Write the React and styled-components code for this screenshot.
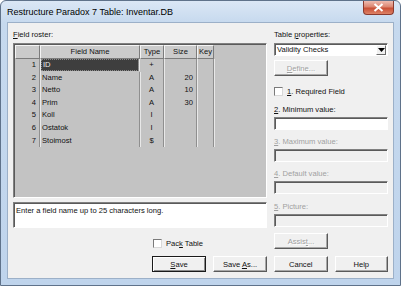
import styled, { createGlobalStyle } from "styled-components";

const GlobalStyle = createGlobalStyle`
  html, body { margin: 0; padding: 0; background: #fff; }
  body { font-family: "Liberation Sans", Arial, sans-serif; }
`;

const fields = [
  { name: "ID", type: "+", size: "" },
  { name: "Name", type: "A", size: "20" },
  { name: "Netto", type: "A", size: "10" },
  { name: "Prim", type: "A", size: "30" },
  { name: "Koll", type: "I", size: "" },
  { name: "Ostatok", type: "I", size: "" },
  { name: "Stoimost", type: "$", size: "" },
];

const cols = "25px 100px 24px 33px 17px 1fr";

export default function App() {
  return (
    <>
      <GlobalStyle />
      <Window>
        <TitleBar>
          <Title>Restructure Paradox 7 Table: Inventar.DB</Title>
          <CloseButton>
            <svg width="11" height="9" viewBox="0 0 11 9">
              <path d="M1.5 1 L9.5 8 M9.5 1 L1.5 8" stroke="#fff" strokeWidth="2" />
            </svg>
          </CloseButton>
        </TitleBar>
        <Client>
          <Column>
            <Label>
              <u>F</u>ield roster:
            </Label>
            <Roster>
              <HeadRow>
                <HeadCell />
                <HeadCell>Field Name</HeadCell>
                <HeadCell>Type</HeadCell>
                <HeadCell>Size</HeadCell>
                <HeadCell>Key</HeadCell>
              </HeadRow>
              {fields.map((f, i) => (
                <Row key={f.name}>
                  <Cell $align="right">{i + 1}</Cell>
                  <Cell $selected={i === 0}>{f.name}</Cell>
                  <Cell $align="center">{f.type}</Cell>
                  <Cell $align="right">{f.size}</Cell>
                  <Cell />
                </Row>
              ))}
            </Roster>
            <Status>Enter a field name up to 25 characters long.</Status>
            <CheckRow $top={10} $indent={140}>
              <Box />
              <span>
                Pac<u>k</u> Table
              </span>
            </CheckRow>
            <Buttons $top={8} $end>
              <Button $default>
                <u>S</u>ave
              </Button>
              <Button>
                Save <u>A</u>s...
              </Button>
            </Buttons>
          </Column>
          <Column>
            <Label>
              Table <u>p</u>roperties:
            </Label>
            <Select>
              <span>Validity Checks</span>
              <Arrow>
                <svg width="7" height="4" viewBox="0 0 7 4">
                  <path d="M0 0 H7 L3.5 4 Z" fill="#000" />
                </svg>
              </Arrow>
            </Select>
            <Button disabled $top={4}>
              <u>D</u>efine...
            </Button>
            <CheckRow $top={10}>
              <Box />
              <span>
                <u>1</u>. Required Field
              </span>
            </CheckRow>
            <Label $top={9} $h={10}>
              <u>2</u>. Minimum value:
            </Label>
            <Input $top={2} />
            <Label $top={7} $h={10} $off>
              <u>3</u>. Maximum value:
            </Label>
            <Input $top={2} $off />
            <Label $top={7} $h={10} $off>
              <u>4</u>. Default value:
            </Label>
            <Input $top={2} $off />
            <Label $top={8} $h={10} $off>
              <u>5</u>. Picture:
            </Label>
            <Input $top={2} $off />
            <Button disabled $top={6}>
              Assis<u>t</u>...
            </Button>
            <Buttons $top={7}>
              <Button>Cancel</Button>
              <Button>Help</Button>
            </Buttons>
          </Column>
        </Client>
      </Window>
    </>
  );
}

const Window = styled.div`
  width: 401px;
  height: 286px;
  box-sizing: border-box;
  display: flex;
  flex-direction: column;
  padding: 0 6px 6px 6px;
  background: linear-gradient(#dbe7f5 0px, #c6d9ee 22px, #bfd4ec 100%);
  border: 1px solid #5f728a;
  border-radius: 6px 6px 0 0;
`;

const TitleBar = styled.div`
  height: 21px;
  display: flex;
  align-items: flex-start;
`;

const Title = styled.div`
  font: 9px "Liberation Sans", Arial, sans-serif;
  color: #000;
  line-height: 10px;
  margin-top: 6px;
  flex: 1;
`;

const CloseButton = styled.div`
  width: 31px;
  height: 14px;
  box-sizing: border-box;
  display: flex;
  align-items: center;
  justify-content: center;
  background: linear-gradient(#eebbb0, #dc8570 45%, #c94f36 55%, #dd8266);
  border: 1px solid #8a3a2e;
  border-top: none;
  border-radius: 0 0 4px 4px;
`;

const Client = styled.div`
  flex: 1;
  display: grid;
  grid-template-columns: 254px 114px;
  column-gap: 7px;
  padding: 6px 0 0 5px;
  background: #f0f0f0;
  border: 1px solid #9cb0c8;
  font: 7.6px "Liberation Sans", Arial, sans-serif;
  color: #111;
`;

const Column = styled.div`
  display: flex;
  flex-direction: column;
`;

const Label = styled.div`
  height: ${(p) => p.$h || 11}px;
  line-height: ${(p) => p.$h || 11}px;
  margin-top: ${(p) => p.$top || 0}px;
  margin-bottom: ${(p) => (p.$h ? 0 : 3)}px;
  color: ${(p) => (p.$off ? "#a0a0a0" : "#111")};
  white-space: nowrap;
`;

const sunken = `
  box-sizing: border-box;
  border: 1px solid;
  border-color: #808080 #ffffff #ffffff #808080;
  box-shadow: inset 1px 1px 0 #5a5a5a;
`;

const Roster = styled.div`
  ${sunken}
  height: 155px;
  background: #c3c3c3;
  padding: 1px 0 0 1px;
`;

const HeadRow = styled.div`
  display: grid;
  grid-template-columns: ${cols};
  height: 14px;
`;

const HeadCell = styled.div`
  box-sizing: border-box;
  border: 1px solid;
  border-color: #f4f4f4 #7c7c7c #7c7c7c #f4f4f4;
  background: #cbcbcb;
  text-align: center;
  line-height: 12px;
  white-space: nowrap;
  overflow: hidden;
`;

const Row = styled.div`
  display: grid;
  grid-template-columns: ${cols};
  height: 12.6px;
`;

const Cell = styled.div`
  box-sizing: border-box;
  line-height: 12px;
  padding: 0 ${(p) => (p.$align === "right" ? "3px" : "2px")} 0 2px;
  text-align: ${(p) => p.$align || "left"};
  border-right: 1px solid #8f8f8f;
  box-shadow: 1px 0 0 #e8e8e8;
  white-space: nowrap;
  ${(p) =>
    p.$selected &&
    `
    background: #3e3e3e;
    color: #ececec;
    outline: 1px dotted #8a8a8a;
    outline-offset: -1px;
    margin: 0 1px 1px 1px;
  `}
`;

const Status = styled.div`
  ${sunken}
  margin-top: 4px;
  height: 26px;
  background: #fff;
  padding: 2px 2px;
  line-height: 11px;
`;

const CheckRow = styled.div`
  display: flex;
  align-items: center;
  gap: 4px;
  height: 10px;
  margin-top: ${(p) => p.$top || 0}px;
  padding-left: ${(p) => p.$indent || 0}px;
  white-space: nowrap;
`;

const Box = styled.div`
  box-sizing: border-box;
  width: 9px;
  height: 9px;
  background: #fff;
  border: 1px solid;
  border-color: #7a7a7a #d8d8d8 #d8d8d8 #7a7a7a;
`;

const Buttons = styled.div`
  display: flex;
  gap: 7px;
  margin-top: ${(p) => p.$top || 0}px;
  justify-content: ${(p) => (p.$end ? "flex-end" : "flex-start")};
`;

const Button = styled.button`
  box-sizing: border-box;
  width: 54px;
  height: 16px;
  padding: 0;
  margin-top: ${(p) => p.$top || 0}px;
  font: 7.6px "Liberation Sans", Arial, sans-serif;
  color: ${(p) => (p.disabled ? "#a0a0a0" : "#111")};
  text-shadow: ${(p) => (p.disabled ? "1px 1px 0 #fff" : "none")};
  background: #f0f0f0;
  border: 1px solid;
  border-color: ${(p) =>
    p.$default ? "#1a1a1a" : "#ffffff #5a5a5a #5a5a5a #ffffff"};
  box-shadow: ${(p) =>
    p.$default
      ? "inset 1px 1px 0 #fff, inset -1px -1px 0 #8a8a8a"
      : "inset -1px -1px 0 #a8a8a8"};
`;

const Select = styled.div`
  ${sunken}
  height: 13px;
  background: #fff;
  display: flex;
  align-items: center;
  justify-content: space-between;
  padding: 0 1px 0 2px;
  line-height: 11px;
`;

const Arrow = styled.div`
  box-sizing: border-box;
  width: 10px;
  height: 10px;
  display: flex;
  align-items: center;
  justify-content: center;
  background: #f0f0f0;
  border: 1px solid;
  border-color: #fff #6a6a6a #6a6a6a #fff;
`;

const Input = styled.div`
  ${sunken}
  height: 13px;
  margin-top: ${(p) => p.$top || 0}px;
  background: ${(p) => (p.$off ? "#f0f0f0" : "#fff")};
`;
